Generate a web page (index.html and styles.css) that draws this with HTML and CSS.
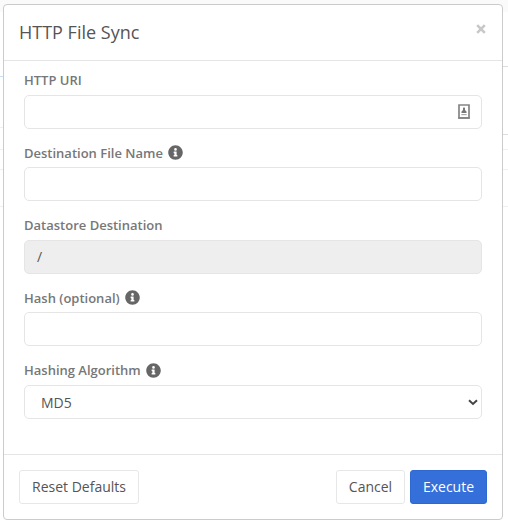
FILE: index.html
```html
<!DOCTYPE html>
<html lang="en">
<head>
<meta charset="utf-8">
<title>HTTP File Sync</title>
<link rel="stylesheet" href="styles.css">
</head>
<body>
<svg width="0" height="0" class="defs" aria-hidden="true">
  <symbol id="info" viewBox="0 0 512 512"><path fill="currentColor" d="M256 8C119 8 8 119 8 256s111 248 248 248 248-111 248-248S393 8 256 8zm0 96a46 46 0 1 1 0 92 46 46 0 0 1 0-92zm64 280a12 12 0 0 1-12 12h-104a12 12 0 0 1-12-12v-34a12 12 0 0 1 12-12h14v-60h-14a12 12 0 0 1-12-12v-34a12 12 0 0 1 12-12h78a12 12 0 0 1 12 12v106h14a12 12 0 0 1 12 12z"/></symbol>
</svg>
<div class="page-lines"><i class="band"></i><i class="l1"></i><i class="l2"></i><i class="l3"></i><i class="l4"></i><i class="l5"></i><i class="r1"></i></div>
<form class="modal">
  <header class="modal-header">
    <h1>HTTP File Sync</h1>
    <button type="button" class="close" aria-label="Close"><svg width="10" height="10" viewBox="0 0 10 10"><path d="M1.200 1.200l7.600 7.600M8.800 1.200L1.200 8.800" stroke="#c8c8c8" stroke-width="2.600"/></svg></button>
  </header>
  <div class="modal-body">
    <div class="group">
      <label>HTTP URI</label>
      <div class="control uri"><svg width="12" height="15" viewBox="0 0 12 15"><path d="M1 1h10v13H1z" fill="#fff" stroke="#858585" stroke-width="1.700"/><path d="M6 3l1 1.200v1.800l1.500 1.500v1.500h-5v-1.500L5 6v-1.800z" fill="#777"/><path d="M3.300 10h5.400v1.200H3.300z" fill="#aaa"/><path d="M.2 13h11.600v1.800H.2z" fill="#858585"/></svg></div>
    </div>
    <div class="group">
      <label>Destination File Name <svg class="info"><use href="#info"/></svg></label>
      <div class="control"></div>
    </div>
    <div class="group">
      <label>Datastore Destination</label>
      <div class="control disabled">/</div>
    </div>
    <div class="group">
      <label>Hash (optional) <svg class="info"><use href="#info"/></svg></label>
      <div class="control"></div>
    </div>
    <div class="group">
      <label>Hashing Algorithm <svg class="info"><use href="#info"/></svg></label>
      <div class="control select"><span>MD5</span><svg width="10" height="7" viewBox="0 0 10 7"><path d="M1 1.300l4 3.700 4-3.700" fill="none" stroke="#444" stroke-width="2"/></svg></div>
    </div>
  </div>
  <footer class="modal-footer">
    <button type="button" class="btn reset">Reset Defaults</button>
    <button type="button" class="btn cancel">Cancel</button>
    <button type="button" class="btn primary">Execute</button>
  </footer>
</form>
</body>
</html>
```
FILE: styles.css
```css
* { box-sizing: border-box; }
body {
  margin: 0;
  height: 525px;
  padding: 4px 5px 0 3px;
  overflow: hidden;
  background: #fff;
  font-family: "Open Sans", sans-serif;
  font-size: 14px;
  color: #555;
}
.defs { position: absolute; }

/* Edges of the page that show behind the dialog */
.page-lines i { position: absolute; left: 0; width: 508px; height: 1px; background: #f0f0f0; }
.page-lines .band { top: 0; height: 12px; background: #fafafa; }
.page-lines .l1 { top: 76px; width: 4px; background: #c9dcf5; }
.page-lines .l2 { top: 127px; width: 4px; }
.page-lines .l3 { top: 149px; }
.page-lines .l4 { top: 169px; }
.page-lines .l5 { top: 206px; }
.page-lines .r1 { top: 66px; left: 502px; width: 12px; height: 69px; border: 1px solid #ddd; background: #fff; }

.modal {
  position: relative;
  display: flex;
  flex-direction: column;
  width: 500px;
  height: 516px;
  margin: 0;
  background: #fff;
  border: 1px solid #cbcbcb;
  border-radius: 4px;
}
.modal-header {
  display: flex;
  justify-content: space-between;
  height: 56px;
  padding: 0 16px 0 15px;
  border-bottom: 1px solid #e5e5e5;
}
.modal-header h1 { margin: 0; font-size: 18px; font-weight: 400; line-height: 55px; }
.close { display: flex; width: 10px; height: 10px; margin-top: 19px; padding: 0; border: 0; background: none; }
.modal-body { flex: 1; padding: 9.750px 20px 0; }
.group { height: 72.500px; }
.group label {
  display: flex;
  align-items: center;
  gap: 5px;
  height: 24px;
  padding-bottom: 5.500px;
  font-size: 13px;
  font-weight: 600;
  color: #777;
}
.info { width: 15px; height: 15px; color: #666; }
.control {
  display: flex;
  align-items: center;
  height: 34px;
  padding: 0 12px;
  border: 1px solid #e5e5e5;
  border-radius: 5px;
  background: #fff;
}
.uri { justify-content: flex-end; padding-right: 11px; }
.disabled { background: #eee; }
.select { justify-content: space-between; padding: 1px 3px 0 16px; }
.modal-footer {
  display: flex;
  height: 65px;
  padding: 15px 15px 0;
  border-top: 1px solid #e5e5e5;
}
.btn {
  height: 34px;
  padding: 0 0 2px;
  border: 1px solid #e5e7e9;
  border-radius: 3px;
  background: #fff;
  color: #555;
  font: 14px "Open Sans", sans-serif;
}
.reset { width: 120px; }
.cancel { width: 69px; margin-left: auto; margin-right: 5px; }
.primary { width: 77px; background: #346fda; border-color: #2d68d3; color: #fff; }
```
